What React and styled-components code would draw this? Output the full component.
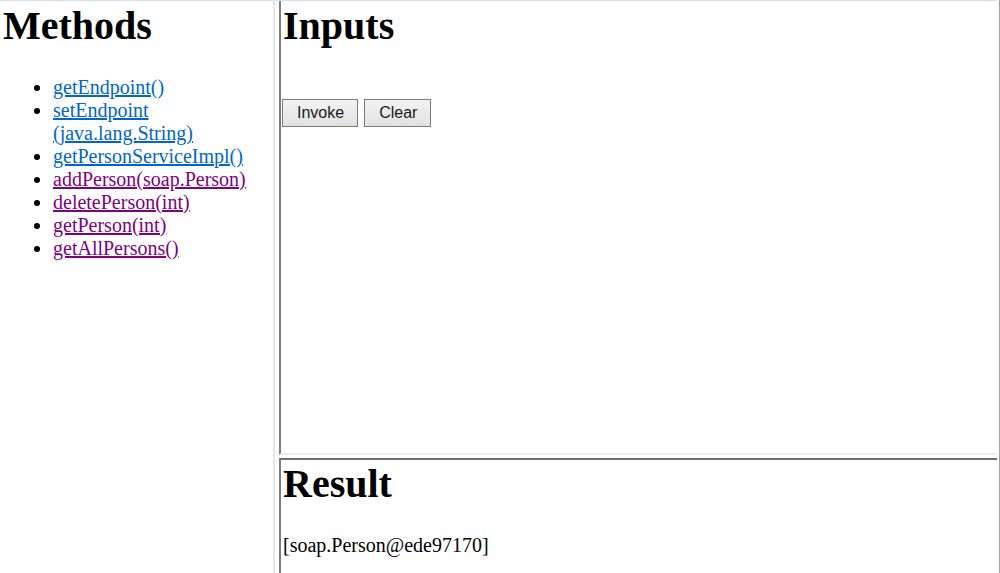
import React from "react";
import styled, { createGlobalStyle } from "styled-components";

const GlobalStyle = createGlobalStyle`
  html, body {
    margin: 0;
    padding: 0;
    background: #ffffff;
  }
  body {
    font-family: "Liberation Serif", "Times New Roman", serif;
    font-size: 20px;
    color: #000000;
  }
`;

const methods = [
    { label: "getEndpoint()", visited: false },
    { label: "setEndpoint", rest: "(java.lang.String)", visited: false },
    { label: "getPersonServiceImpl()", visited: false },
    { label: "addPerson(soap.Person)", visited: true },
    { label: "deletePerson(int)", visited: true },
    { label: "getPerson(int)", visited: true },
    { label: "getAllPersons()", visited: true },
];

const App = () => {
    return (
        <React.Fragment>
            <GlobalStyle />
            <Page>
                <Frameset>
                    <LeftFrame>
                        <Heading>Methods</Heading>
                        <MethodList>
                            {methods.map((m) => (
                                <li key={m.label}>
                                    <MethodLink href="#" $visited={m.visited}>
                                        {m.label}
                                        {m.rest && <wbr />}
                                        {m.rest}
                                    </MethodLink>
                                </li>
                            ))}
                        </MethodList>
                    </LeftFrame>
                    <Splitter />
                    <RightColumn>
                        <InputsFrame>
                            <Heading>Inputs</Heading>
                            <ButtonRow>
                                <Button>Invoke</Button>
                                <Button>Clear</Button>
                            </ButtonRow>
                        </InputsFrame>
                        <RowGap />
                        <ResultFrame>
                            <Heading>Result</Heading>
                            <ResultText>[soap.Person@ede97170]</ResultText>
                        </ResultFrame>
                    </RightColumn>
                </Frameset>
            </Page>
        </React.Fragment>
    );
};

const Page = styled.div`
  width: 1000px;
  height: 573px;
  box-sizing: border-box;
  display: flex;
  border-right: 1px solid #a3a3a3;
  overflow: hidden;
`;

const Frameset = styled.div`
  flex: 1;
  display: flex;
  margin-right: 2px;
  border-top: 1px solid #d3e1f1;
`;

const LeftFrame = styled.div`
  width: 275px;
  flex-shrink: 0;
  padding: 1px 0 0 2px;
  box-sizing: border-box;
  border-right: 2px solid #e6e6e6;
`;

const Splitter = styled.div`
  width: 4px;
  flex-shrink: 0;
`;

const RightColumn = styled.div`
  flex: 1;
  display: flex;
  flex-direction: column;
  min-width: 0;
`;

const InputsFrame = styled.div`
  height: 454px;
  box-sizing: border-box;
  border-left: 2px solid #7d7d7d;
  border-bottom: 2px solid #ececec;
  padding: 1px 0 0 1px;
  overflow: hidden;
`;

const RowGap = styled.div`
  height: 3px;
  flex-shrink: 0;
`;

const ResultFrame = styled.div`
  flex: 1;
  border-left: 2px solid #7d7d7d;
  border-top: 2px solid #707070;
  padding: 0 0 0 1px;
  overflow: hidden;
`;

const Heading = styled.h1`
  font-family: "Liberation Serif", "Times New Roman", serif;
  font-size: 40px;
  font-weight: bold;
  margin: 0 0 27px 0;
  padding-left: 1px;
`;

const MethodList = styled.ul`
  margin: 20px 0 0 0;
  padding-left: 51px;
  list-style: disc;
  line-height: normal;
`;

const MethodLink = styled.a`
  color: ${(p) => (p.$visited ? "#800080" : "#0066cc")};
  text-decoration: underline;
`;

const ButtonRow = styled.div`
  display: flex;
  gap: 6px;
  margin-top: 50px;
`;

const Button = styled.button`
  height: 28px;
  padding: 0 13px 0 14px;
  font-family: "Liberation Sans", Arial, sans-serif;
  font-size: 16px;
  color: #1a1a1a;
  background: linear-gradient(#f2f2f2, #e2e2e2);
  border: 1px solid #7a7a7a;
  border-radius: 0;
  cursor: pointer;
`;

const ResultText = styled.p`
  margin: 20px 0 0 0;
  padding-left: 1px;
`;

export default App;
